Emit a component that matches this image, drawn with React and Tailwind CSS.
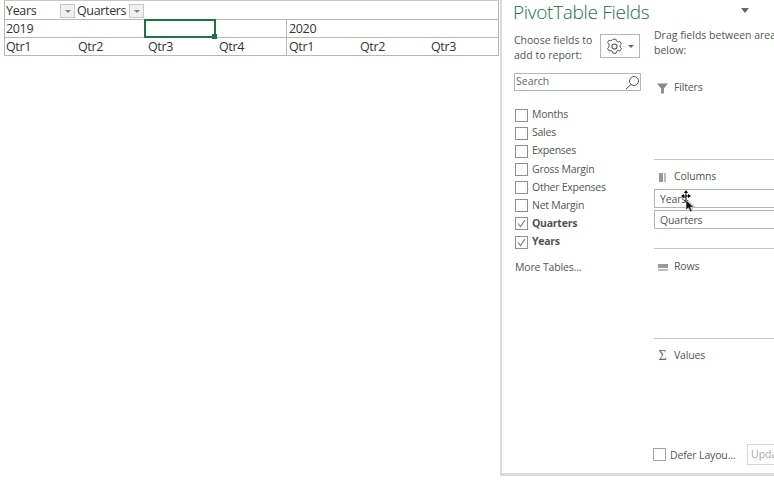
import React from "react";

const font = { fontFamily: '"Open Sans","Noto Sans",sans-serif' };

function Drop() {
  return (
    <span className="flex h-[14px] w-[15px] shrink-0 items-center justify-center border border-[#c6c6c6] bg-[#f0f0f0]">
      <span className="h-0 w-0 border-x-[3px] border-t-[3px] border-x-transparent border-t-[#7f7f7f]" />
    </span>
  );
}

function Cell({ children, left, className = "" }) {
  return (
    <div className={`flex h-[18px] items-center overflow-hidden whitespace-nowrap font-['Open_Sans'] text-[12.5px] tracking-[-0.35px] text-[#333] ${left ? "border-l border-[#b8b8b8] pl-[2px]" : "pl-[1px]"} ${className}`}>
      {children}
    </div>
  );
}

function Table() {
  const q = ["Qtr1", "Qtr2", "Qtr3", "Qtr4", "Qtr1", "Qtr2", "Qtr3"];
  return (
    <div className="ml-[4px] w-[495px] border-x border-b border-[#b8b8b8]">
      <div className="grid h-[19px] grid-cols-[70px_69px_auto] border-b border-[#b8b8b8] pt-[1px]">
        <Cell className="justify-between">Years<Drop /></Cell>
        <Cell className="justify-between pl-[2px]">Quarters<Drop /></Cell>
        <div />
      </div>
      <div className="grid h-[18px] grid-cols-[139px_72px_70px_auto] border-b border-[#b8b8b8]">
        <Cell className="h-[17px]">2019</Cell>
        <div className="relative h-[19px] -translate-y-[1px] border-2 border-[#217346]">
          <span className="absolute -bottom-[3px] -right-[3px] h-[5px] w-[5px] bg-[#217346]" />
        </div>
        <div />
        <Cell left className="h-[17px]">2020</Cell>
      </div>
      <div className="grid h-[17px] grid-cols-[72px_70px_71px_68px_73px_71px_auto]">
        {q.map((t, i) => (
          <Cell key={i} left={i === 4} className="h-[17px]">{t}</Cell>
        ))}
      </div>
    </div>
  );
}

function Check({ checked, className = "" }) {
  return (
    <span className={`flex h-[13px] w-[13px] shrink-0 items-center justify-center border border-[#8f8f8f] bg-white ${className}`}>
      {checked && (
        <svg width="11" height="11" viewBox="0 0 11 11" fill="none" stroke="#777" strokeWidth="1.1">
          <path d="M2 5.500 L4.500 8.500 L9 2" />
        </svg>
      )}
    </span>
  );
}

function Field({ label, checked }) {
  return (
    <div className="flex h-[18.15px] items-center gap-[4px]">
      <Check checked={checked} />
      <span className={`text-[10.5px] tracking-[-0.25px] text-[#555] ${checked ? "font-bold text-[#444]" : ""}`}>{label}</span>
    </div>
  );
}

function Gear() {
  return (
    <svg width="17" height="17" viewBox="0 0 24 24" fill="none" stroke="#555" strokeWidth="1.5" strokeLinejoin="round">
      <path d="M9.600 2.500h4.800l.7 3 2.500 1.400 3-.9 2.300 4-2.200 2.100v2.800l2.200 2.100-2.300 4-3-.9-2.500 1.400-.7 3H9.600l-.7-3-2.500-1.400-3 .9-2.300-4 2.200-2.100V10L1.100 8l2.300-4 3 .9 2.500-1.400z" transform="translate(1.200 -.5) scale(.9)" />
      <circle cx="12" cy="12" r="3.600" />
    </svg>
  );
}

function Caret({ className = "" }) {
  return <span className={`h-0 w-0 border-x-transparent border-t-[#666] ${className}`} />;
}

function Area({ icon, label, h, border, children }) {
  return (
    <div className={`${h} ${border ? "border-t border-[#c4c4c4]" : ""}`}>
      <div className="flex h-[18px] items-center gap-[6px] pl-[3px] pt-[2px]">
        <span className="flex w-[11px] justify-center">{icon}</span>
        <span className="text-[10.5px] tracking-[-0.15px] text-[#555]">{label}</span>
      </div>
      {children}
    </div>
  );
}

function Pill({ children }) {
  return (
    <div className="flex h-[19px] w-[130px] items-center border border-[#b5b5b5] pl-[5px] pt-[2px] text-[10.5px] tracking-[-0.15px] text-[#555]">
      {children}
    </div>
  );
}

function Cursor() {
  return (
    <svg className="absolute left-[679px] top-[190px]" width="18" height="24" viewBox="0 0 18 24">
      <path d="M9 10l0 10 2.500-2.200 1.800 4 1.800-.8-1.800-3.800 3.200-.2z" fill="#bbb" opacity=".7" />
      <path d="M7 1v11M3 6h8" stroke="#000" strokeWidth="1" />
      <path d="M7 0l-2 3h4zM7 13l-2-3h4zM2 6l3-2v4zM12 6l-3-2v4z" fill="#000" />
      <path d="M7 10l0 10 2.500-2.200 1.800 4 1.800-.8-1.800-3.800 3.200-.2z" fill="#111" stroke="#ddd" strokeWidth=".6" />
    </svg>
  );
}

export default function App() {
  return (
    <div style={font} className="relative flex h-[480px] w-[774px] overflow-hidden bg-white">
      <div className="w-[500px] shrink-0">
        <div className="ml-[4px] h-px w-[495px] bg-[#c8c8c8]" />
        <Table />
      </div>
      <div className="h-[476px] w-[274px] shrink-0 border-b-[3px] border-l-[2px] border-[#dcdcdc] pl-[11px]">
        <div className="flex h-[24px] w-[261px] items-center justify-between pr-[25px]">
          <span className="text-[19px] font-light leading-[24px] tracking-[-0.3px] text-[#217346]">PivotTable Fields</span>
          <Caret className="-translate-y-[2px] border-x-[4.5px] border-t-[5px]" />
        </div>
        <div className="flex pt-[4px]">
          <div className="w-[141px] shrink-0 pl-[1px]">
            <div className="mt-[6px] flex items-start justify-between pr-[14px]">
              <span className="-mt-[1px] text-[10.5px] leading-[14.5px] text-[#555]">Choose fields to<br />add to report:</span>
              <span className="flex h-[24px] w-[40px] items-center justify-center gap-[5px] border border-[#b5b5b5]">
                <Gear />
                <Caret className="border-x-[3px] border-t-[3px]" />
              </span>
            </div>
            <div className="mt-[11px] flex h-[18px] w-[127px] items-center justify-between border border-[#b5b5b5] pl-[1px] text-[10.5px] text-[#666]">
              <span>Search</span>
              <svg width="15" height="15" viewBox="0 0 15 15" fill="none" stroke="#555" strokeWidth="1">
                <circle cx="9" cy="6" r="4.500" />
                <path d="M6 9.500L1 14" />
              </svg>
            </div>
            <div className="mt-[15px] pl-[1px]">
              {["Months", "Sales", "Expenses", "Gross Margin", "Other Expenses", "Net Margin"].map((f) => (
                <Field key={f} label={f} />
              ))}
              <Field label="Quarters" checked />
              <Field label="Years" checked />
            </div>
            <div className="mt-[7px] pl-[1px] text-[10.5px] leading-[18px] tracking-[-0.15px] text-[#555]">More Tables...</div>
          </div>
          <div className="min-w-0 flex-1">
            <div className="whitespace-nowrap text-[10.5px] leading-[15px] text-[#555]">Drag fields between areas<br />below:</div>
            <div className="mt-[20px]">
              <Area h="h-[81px]" label="Filters" icon={
                <svg width="12" height="11" viewBox="0 0 12 11"><path d="M0 0h12L7.500 5.500V11h-3V5.500z" fill="#888" /></svg>
              } />
            </div>
            <Area border h="h-[89px] pt-[7px]" label="Columns" icon={
              <span className="flex gap-[1px]"><span className="h-[9px] w-[4px] bg-[#999]" /><span className="h-[9px] w-[2px] bg-[#bbb]" /></span>
            }>
              <div className="mt-[4px] flex flex-col gap-[2px]">
                <Pill>Years</Pill>
                <Pill>Quarters</Pill>
              </div>
            </Area>
            <Area border h="h-[90px] pt-[8px]" label="Rows" icon={
              <span className="flex flex-col gap-[1px]"><span className="h-[4px] w-[10px] bg-[#999]" /><span className="h-[2px] w-[10px] bg-[#bbb]" /></span>
            } />
            <Area border h="h-[106px] pt-[7px]" label="Values" icon={
              <span className="font-['Liberation_Serif'] text-[14px] leading-none text-[#666]">Σ</span>
            } />
            <div className="flex w-[200px] items-center whitespace-nowrap">
              <Check className="-ml-[1px] border-[#a5a5a5]" />
              <span className="ml-[4px] w-[72px] pt-[3px] text-[10.5px] tracking-[-0.15px] text-[#555]">Defer Layou...</span>
              <span className="ml-[5px] flex h-[21px] w-[60px] shrink-0 items-center border border-[#d8d8d8] pl-[3px] text-[10.5px] text-[#aaa]">Update</span>
            </div>
          </div>
        </div>
      </div>
      <Cursor />
    </div>
  );
}
